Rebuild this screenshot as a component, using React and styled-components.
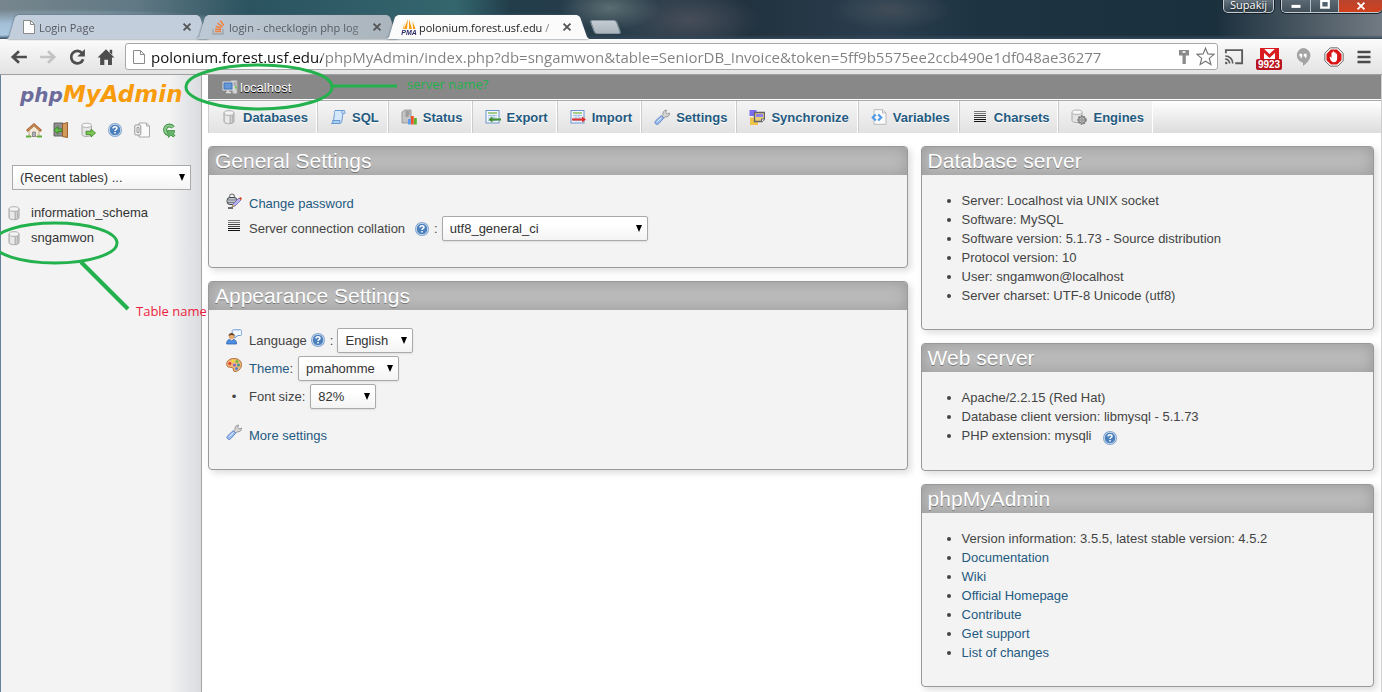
import React from "react";
import styled, { createGlobalStyle, css } from "styled-components";

const GlobalStyle = createGlobalStyle`
  * {
    box-sizing: border-box;
  }

  body {
    margin: 0;
    background: #fff;
    color: #444;
    font-family: "Liberation Sans", Arial, sans-serif;
    font-size: 13px;
    line-height: 19px;
  }

  a {
    color: #235a81;
    text-decoration: none;
  }

  ul {
    margin: 0;
    padding: 0;
    list-style: none;
  }
`;

const uiFont = css`
  font-family: "Open Sans", "Noto Sans", sans-serif;
`;

/* ---------- browser window ---------- */

const Window = styled.div`
  position: relative;
  display: flex;
  flex-direction: column;
  min-height: 100vh;
  overflow: hidden;
`;

const TitleBar = styled.header`
  display: flex;
  align-items: flex-end;
  height: 39px;
  padding-left: 7px;
  ${uiFont}
  background:
    linear-gradient(to bottom, transparent 35px, #33485a 39px),
    radial-gradient(ellipse 260px 30px at 60px 39px, #b3cfe8 0%, #a3bfd8 55%, transparent 100%),
    radial-gradient(ellipse 50px 22px at 610px 8px, #5b6d72 0%, transparent 100%),
    radial-gradient(ellipse 70px 30px at 690px 20px, #464d59 0%, transparent 100%),
    radial-gradient(ellipse 60px 20px at 890px 10px, #414d58 0%, transparent 100%),
    linear-gradient(to right, #77868e 0%, #5f7883 10%, #2b5360 18%, #34666e 33%, #223c4a 37%, #2a3e4b 46%, #22323f 54%, #2a3e4e 64%, #1d3341 71%, #1b303d 88%, #56626c 96%, #717a82 100%);
`;

const Tabs = styled.nav`
  display: flex;
  align-items: flex-end;
`;

const TabShadow = styled.div`
  position: relative;
  z-index: ${(p) => (p.$active ? 2 : 1)};
  margin-right: -12px;
  filter: drop-shadow(0 0 1px #4d5c6a);
`;

const Tab = styled.div`
  display: flex;
  align-items: center;
  width: 202px;
  height: 24px;
  padding: 0 17px 0 14px;
  gap: 2px;
  font-size: 11px;
  color: ${(p) => (p.$active ? "#222" : "#555a62")};
  background: ${(p) => (p.$active ? "#fbfbfb" : p.$tint)};
  clip-path: polygon(0 100%, 2px 92%, 8px 8%, 11px 0, 190px 0, 193px 8%, 200px 92%, 100% 100%);
`;

const TabTitle = styled.span`
  flex: 1;
  white-space: nowrap;
  mask-image: ${(p) => (p.$fade ? "linear-gradient(to right, #000 84%, #0005)" : "none")};
`;

const Muted = styled.span`
  color: #888;
`;

const PlainButton = styled.button`
  display: inline-flex;
  align-items: center;
  justify-content: center;
  padding: 0;
  border: 0;
  background: none;
  color: inherit;
  font: inherit;
`;

const NewTab = styled(PlainButton)`
  width: 27px;
  height: 14px;
  margin: 0 0 5px 15px;
  border-radius: 3px;
  border: 1px solid #8998a2;
  background: linear-gradient(#c4ccd2, #a9b4bb);
  transform: skewX(20deg);
`;

const WindowControls = styled.div`
  display: flex;
  align-self: flex-start;
  gap: 7px;
  margin-left: auto;
`;

const glass = css`
  border: 1px solid #c4cbd1;
  border-top: 0;
  border-radius: 0 0 5px 5px;
  box-shadow: 0 0 0 1px #15222c;
`;

const UserButton = styled(PlainButton)`
  ${glass}
  width: 51px;
  height: 13px;
  padding-bottom: 3px;
  color: #fff;
  font-size: 11px;
  line-height: 10px;
  text-shadow: 0 1px 2px #000;
  background: linear-gradient(#66747e, #33434f);
`;

const CaptionGroup = styled.div`
  ${glass}
  display: flex;
  height: 13px;
  border-right: 0;
  overflow: hidden;
`;

const CaptionButton = styled(PlainButton)`
  width: ${(p) => (p.$close ? 44 : 28)}px;
  border-left: ${(p) => (p.$first ? 0 : 1)}px solid #b5bdc4;
  background: ${(p) =>
    p.$close ? "linear-gradient(#b8442f, #d2401c)" : "linear-gradient(#5b6974, #42505c)"};
`;

const Toolbar = styled.div`
  display: flex;
  align-items: center;
  height: 36px;
  padding: 0 10px;
  border-bottom: 1px solid #a0a0a0;
  background: linear-gradient(#fbfbfb, #e3e3e3);
`;

const NavButtons = styled.div`
  display: flex;
  gap: 11px;
  margin-right: 10px;
`;

const Omnibox = styled.div`
  display: flex;
  flex: 1;
  align-items: center;
  gap: 4px;
  height: 27px;
  padding: 0 2px 0 5px;
  border: 1px solid #a8a8a8;
  border-radius: 3px;
  background: #fff;
`;

/* host part is dark, path part is grey */
const UrlInput = styled.input`
  flex: 1;
  min-width: 0;
  height: 25px;
  padding: 0;
  border: 0;
  outline: 0;
  ${uiFont}
  font-size: 15px;
  color: #808080;
  -webkit-text-fill-color: transparent;
  background: linear-gradient(to right, #111 171px, #808080 171px);
  -webkit-background-clip: text;
  background-clip: text;
`;

const Extensions = styled.div`
  display: flex;
  align-items: center;
  gap: 12px;
  margin-left: 6px;
`;

const Gmail = styled(PlainButton)`
  flex-direction: column;
  width: 26px;
  padding-top: 5px;
`;

const MailCount = styled.span`
  width: 26px;
  margin-top: -4px;
  border-radius: 2px;
  background: #b8141f;
  color: #fff;
  font: bold 10px/11px "Liberation Sans", Arial, sans-serif;
`;

/* ---------- page ---------- */

const Page = styled.div`
  display: flex;
  flex: 1;
  border-left: 1px solid #66809c;
  border-right: 1px solid #d0d0d0;
`;

const Sidebar = styled.aside`
  flex: 0 0 201px;
  border-right: 1px solid #a5a5a5;
  background: linear-gradient(to right, #f3f3f3 168px, #e6e7e9 184px, #dadce0 200px);
`;

const Logo = styled.a`
  display: block;
  height: 46px;
  padding: 4px 0 0 19px;
  font: italic bold 23px/30px "DejaVu Sans", Verdana, sans-serif;
  color: #f89c0e;
  white-space: nowrap;
`;

const LogoPrefix = styled.span`
  font-size: 20px;
  color: #6c6c9c;
`;

const QuickLinks = styled.div`
  display: flex;
  gap: 11px;
  height: 44px;
  padding: 1px 0 0 25px;
`;

const SelectBox = styled.div`
  position: relative;
  width: ${(p) => p.$width}px;

  &::after {
    content: "";
    position: absolute;
    top: 9px;
    right: 6px;
    border: solid transparent;
    border-width: 7px 3px 0;
    border-top-color: #000;
    pointer-events: none;
  }
`;

const Select = styled.select`
  display: block;
  width: 100%;
  height: 25px;
  padding: 0 20px 0 7px;
  appearance: none;
  border: 1px solid #aaa;
  border-radius: ${(p) => (p.$square ? 0 : 2)}px;
  box-shadow: ${(p) => (p.$square ? "none" : "0 1px 2px #ddd")};
  background: linear-gradient(#fff 30%, #f3f3f3);
  color: #333;
  font: inherit;
`;

const Recent = styled.div`
  padding-left: 11px;
`;

const DatabaseList = styled.ul`
  padding: 10px 0 0 5px;
`;

const DatabaseItem = styled.li`
  display: flex;
  align-items: center;
  gap: 9px;
  height: 25px;

  a {
    color: #333;
  }
`;

const Main = styled.main`
  flex: 1;
  min-width: 0;
  padding-left: 6px;
`;

const ServerBar = styled.div`
  display: flex;
  align-items: center;
  gap: 2px;
  height: 24px;
  padding-left: 14px;
  background: #888;

  a {
    color: #fff;
    text-shadow: 0 1px 0 #000;
  }
`;

const TopMenu = styled.ul`
  display: flex;
  height: 33px;
  margin: 1px 0 13px;
  border-top: 1px solid #aaa;
  background: linear-gradient(#fff, #dcdcdc);
`;

const TopMenuItem = styled.li`
  border-left: 1px solid #ccc;
  border-right: 1px solid #fff;
  background: linear-gradient(#f5f5f5, #e2e2e2);

  a {
    display: flex;
    align-items: center;
    gap: 6px;
    height: 32px;
    padding: 0 8px 0 12px;
    font-weight: bold;
    text-shadow: 0 1px 0 #fff;
  }
`;

const Columns = styled.div`
  display: flex;
  gap: 13px;
  padding-right: 7px;
`;

const Column = styled.div`
  flex: ${(p) => (p.$wide ? "0 0 60%" : "1")};
  min-width: 0;
`;

const Panel = styled.section`
  margin-bottom: 13px;
  border: 1px solid #999;
  border-radius: 4px;
  background: #f3f3f3;
  box-shadow: 3px 3px 7px #ddd;

  &:last-child {
    margin-bottom: 5px;
  }
`;

const PanelTitle = styled.h2`
  height: 28px;
  margin: 0;
  padding: 0 6px;
  border-radius: 3px 3px 0 0;
  background: #bbb;
  box-shadow: 0 0 15px #999 inset;
  color: #fff;
  font-size: 21px;
  font-weight: normal;
  line-height: 28px;
  text-shadow: 0 1px 0 #777;
`;

const BulletList = styled.ul`
  padding: 16px 0 24px 40px;
  list-style: disc;
`;

const BulletItem = styled.li`
  svg {
    margin-left: 7px;
    vertical-align: -6px;
  }
`;

const SettingsList = styled.ul`
  padding: 16px 0 ${(p) => (p.$tall ? 20 : 26)}px 17px;
`;

const SettingsRow = styled.li`
  display: flex;
  align-items: center;
  height: ${(p) => (p.$tall ? 28 : 25)}px;
  margin-top: ${(p) => (p.$spaced ? 11 : 0)}px;
`;

/* row icons ride a little above the text */
const RowIcon = styled.span`
  display: flex;
  justify-content: center;
  width: 16px;
  margin-right: 7px;
  padding-bottom: ${(p) => (p.$bullet ? 0 : 6)}px;
`;

const Colon = styled.span`
  padding: 0 4px;
`;

const LabelText = styled.label`
  margin-right: ${(p) => p.$gap ?? 5}px;
`;

/* ---------- hand-drawn notes over the page ---------- */

const Marks = styled.svg`
  position: absolute;
  top: 0;
  left: 0;
  z-index: 5;
  fill: none;
  stroke: #22b14c;
  pointer-events: none;
`;

const Note = styled.span`
  position: absolute;
  z-index: 5;
  top: ${(p) => p.$top}px;
  left: ${(p) => p.$left}px;
  ${uiFont}
  font-size: 13px;
  color: ${(p) => p.$color};
`;

/* ---------- icons ---------- */

const Svg = styled.svg`
  display: ${(p) => (p.$inline ? "inline-block" : "block")};
  flex: none;
  fill: none;
`;

const Icon = ({ size = 16, inline, children }) => (
  <Svg width={size} height={size} viewBox="0 0 16 16" $inline={inline} aria-hidden="true">
    {children}
  </Svg>
);

const DbIcon = () => (
  <Icon>
    <path d="M3 4v8.500c0 1.300 2 2.200 5 2.200s5-.9 5-2.200V4z" fill="#d2d2d2" stroke="#a5a5a5" />
    <path d="M5 6v7.500M7 6.500v8" stroke="#fff" />
    <path d="M9.500 6.500v8M11.500 6v7" stroke="#b5b5b5" />
    <ellipse cx="8" cy="4" rx="5" ry="2.300" fill="#f4f4f4" stroke="#b0b0b0" />
  </Icon>
);

const SqlIcon = () => (
  <Icon>
    <path d="M5 1.500h9.500c-2 .5-1.500 3-1.800 5l-1 6c-.2 1.500-.8 2-2 2H1.500c1.500-.5 1.800-1.500 2-3l1-7c.2-1.500-.5-2 .5-3z" fill="#d5e8fb" stroke="#6a9bd0" />
    <path d="M1.500 14.500c1.500 0 1.500-2 1-3h7.500c0 1.500 0 2.500-1 3z" fill="#a9cdf2" stroke="#6a9bd0" />
    <path d="M12 1.500c-1 1-.5 3 .5 3h2.500c.5-2-.5-3-1.500-3z" fill="#b8d6f5" stroke="#6a9bd0" strokeWidth=".8" />
  </Icon>
);

const StatusIcon = () => (
  <Icon>
    <path d="M1 3l3-2h6v12l-3 1H1z" fill="#c4c4c4" stroke="#8d8d8d" strokeWidth=".8" />
    <path d="M4.500 3h4M4.500 5h4M4.500 7h3" stroke="#777" />
    <path d="M7 15.500V10h2.800v5.500z" fill="#5b9bf0" />
    <path d="M10 15.500V7h2.800v8.500z" fill="#f0552a" />
    <path d="M13 15.500V9h2.800v6.500z" fill="#5cb531" />
  </Icon>
);

const TableGlyph = ({ arrow }) => (
  <Icon>
    <rect x="1" y="1.500" width="13" height="12.500" fill="#f4f8fd" stroke="#6d94cd" />
    <path d="M3 4h9" stroke="#8bbf5f" strokeWidth="1.500" />
    <path d="M3 6.500h9M3 9h9M3 11.500h9M6 5.500v7M9 5.500v7" stroke="#a9c1e4" />
    {arrow === "out" ? (
      <path d="M3.500 10.500l4-3v2H16v2H7.500v2z" fill="#3f8f2c" />
    ) : (
      <path d="M16 10.500l-4-3v2H2v2h10v2z" fill="#e2302b" />
    )}
  </Icon>
);

const WrenchIcon = () => (
  <Icon>
    <path d="M9 5.500c-.5-2 1-4.500 3.500-4.500l-.8 2.500 1.500 1.300L15.500 4c.3 2.500-2 4.500-4.200 3.800L10 9 7.800 6.800z" fill="#d5d5d5" stroke="#888" strokeWidth=".8" />
    <path d="M7.200 6.700l2.500 2.500-5 5.500c-1 1-2.500.8-3.200 0s-.8-2.200.2-3z" fill="#9dbdf0" stroke="#5880c4" strokeWidth=".9" />
    <path d="M3.500 12.500L7.500 8.500" stroke="#dce8fb" />
  </Icon>
);

const SyncIcon = () => (
  <Icon>
    <path d="M.5 1h7v6h-7z" fill="#7a6df0" />
    <path d="M1 8.500h8V16H1z" fill="#efc347" />
    <path d="M5.500 3.500h10V10l-2.500 2.500H5.500z" fill="#e9cf77" stroke="#5f6270" strokeWidth="1.300" />
    <path d="M7 6.500h7" stroke="#8e82ee" strokeWidth="3" />
    <path d="M12.500 13v-3h3" fill="#fff" stroke="#5f6270" />
  </Icon>
);

const VariablesIcon = () => (
  <Icon>
    <path d="M3 .7h8.500L15 4v11.300H3z" fill="#fafafa" stroke="#bbb" />
    <path d="M11.500.7V4H15" stroke="#bbb" />
    <path d="M4.800 5.500l-3 3 3 3M7.200 5.500l3 3-3 3" stroke="#4f9be8" strokeWidth="2.200" />
  </Icon>
);

const CharsetIcon = () => (
  <Icon>
    <path d="M2 2.500h12M2 4.500h12" stroke="#777" />
    <path d="M2 6.500h12M2 8.500h12" stroke="#444" />
    <path d="M2 10.500h12M2 12.500h12" stroke="#111" />
  </Icon>
);

const EngineIcon = () => (
  <Icon>
    <path d="M1 3.500v8c0 1.200 1.800 2 5 2s5-.8 5-2v-8z" fill="#e4e4e4" stroke="#aaa" />
    <ellipse cx="6" cy="3.200" rx="5" ry="2.200" fill="#f8f8f8" stroke="#b0b0b0" />
    <circle cx="11" cy="11" r="3.800" fill="#bbb" stroke="#777" strokeWidth="1.800" strokeDasharray="1.700 1" />
    <circle cx="11" cy="11" r="3.200" fill="#c5c5c5" stroke="#777" />
    <circle cx="11" cy="11" r="1.200" fill="#f4f4f4" stroke="#777" />
  </Icon>
);

const HelpIcon = ({ inline }) => (
  <Icon inline={inline}>
    <circle cx="8" cy="8" r="7" fill="#7fa3cf" />
    <circle cx="8" cy="8" r="5.700" fill="#4b80bd" stroke="#dbe6f3" strokeWidth=".8" />
    <path d="M6 6.500C6 4.200 10 4.200 10 6.300 10 7.800 8 7.600 8 9M8 10v1.500" stroke="#fff" strokeWidth="1.500" />
  </Icon>
);

const HomeIcon = () => (
  <Icon>
    <path d="M3 8v6.500h10V8L8 4z" fill="#f5ead8" stroke="#b39b7c" strokeWidth=".8" />
    <path d="M6.500 14.500V10h3v4.500z" fill="#a8b0bd" stroke="#777" strokeWidth=".7" />
    <path d="M.8 9L8 2.500 15.200 9" stroke="#a76534" strokeWidth="2.400" />
    <path d="M1.500 8.500L8 2.800l6.500 5.700" stroke="#dd9d62" />
    <path d="M0 14.500h5M11 14.500h5" stroke="#5fae3d" strokeWidth="2" />
  </Icon>
);

const ExitIcon = () => (
  <Icon>
    <path d="M1 1h9v13H1z" fill="#8d8d8d" stroke="#666" />
    <path d="M9.500 2l5-1.500v15l-5-1z" fill="#d29b5c" stroke="#98612b" />
    <path d="M1 8l4-3.500V7h4v2.500H5V12z" fill="#66bd4c" stroke="#2f7d22" strokeWidth=".8" />
  </Icon>
);

const QueryIcon = () => (
  <Icon>
    <path d="M2 3.500v9c0 1.200 2 2 4.500 2s5-.8 5-2v-9z" fill="#e6e6e6" stroke="#aaa" />
    <ellipse cx="6.700" cy="3.300" rx="4.700" ry="2.100" fill="#f8f8f8" stroke="#b0b0b0" />
    <path d="M15.500 11l-4.500-4v2.300H6v3.400h5V15z" fill="#7dc653" stroke="#36801f" strokeWidth=".8" />
  </Icon>
);

const DocsIcon = () => (
  <Icon>
    <path d="M5 1h7.500L15.500 4v11H5z" fill="#fafafa" stroke="#aaa" />
    <path d="M12.500 1v3h3" stroke="#aaa" />
    <rect x=".8" y="3" width="6" height="10" rx="1" fill="#f4f4f4" stroke="#999" />
    <path d="M3 5.500h2v5H3z" stroke="#999" />
  </Icon>
);

const ReloadGreenIcon = () => (
  <Icon>
    <path d="M12 5.500A4.300 4.300 0 1 0 7.500 12" stroke="#3c8e43" strokeWidth="4" />
    <path d="M12 5.500A4.300 4.300 0 1 0 7.500 12" stroke="#8ccb8e" strokeWidth="2.200" />
    <path d="M6.500 8.500H13.500v2L12.500 11.500 14 13.500 12 15l-2-2-2.500 2.500z" fill="#66b56b" stroke="#3c8e43" strokeWidth=".8" />
  </Icon>
);

const ServerIcon = () => (
  <Icon>
    <path d="M9 1.500h6v13h-4z" fill="#d4d4d4" stroke="#aaa" />
    <path d="M11 4h3M11 6h3" stroke="#888" />
    <rect x="13" y="7.500" width="1.500" height="2" fill="#55c92b" />
    <rect x="1" y="3" width="10" height="8" fill="#3c70b8" stroke="#ddd" />
    <path d="M2.500 4.500h7v5h-7z" fill="#6698d8" />
    <path d="M4 13.500h5M6 11v2.500" stroke="#ddd" strokeWidth="1.600" />
  </Icon>
);

const PasswordIcon = () => (
  <Icon>
    <path d="M3.500 5V3.500c0-3.300 5-3.300 5 0V5" stroke="#888" strokeWidth="1.300" />
    <rect x="1" y="4.500" width="10" height="7" rx="3" fill="#c3c6ce" stroke="#44464e" />
    <path d="M2 7h8M2 9.500h7" stroke="#777c88" />
    <path d="M2 15h5" stroke="#222" strokeWidth="1.300" />
    <path d="M6 14l1-3 6-6 2 2-6 6z" fill="#b9b2f0" stroke="#6a63ac" strokeWidth=".8" />
    <path d="M13 5l2 2 1-1.500L14.500 4z" fill="#e4431d" />
    <path d="M6 14l.8-2.500L8.500 13z" fill="#e0b321" />
  </Icon>
);

const LanguageIcon = () => (
  <Icon>
    <path d="M7.500.8h7c1 0 1.200.7 1.200 1.500V5c0 1-.5 1.500-1.500 1.500H12L8.500 9l.5-2.500C7 6.500 6.200 5.500 6.200 4V2.300C6.200 1.300 6.500.8 7.500.8z" fill="#f2f8ff" stroke="#6d9bd4" />
    <circle cx="5.500" cy="7.500" r="2.700" fill="#e8a96a" />
    <path d="M2.500 7c0-4 6-4 6-.5-2-.8-4-1-6 .5z" fill="#6b452b" />
    <path d="M.7 15c-.2-3 1.300-4.500 3-4.500l2 1.500 1.500-1.500c2 0 3.500 1.500 3.300 4.500z" fill="#4f8fe0" stroke="#2c62ae" strokeWidth=".8" />
  </Icon>
);

const ThemeIcon = () => (
  <Icon>
    <path d="M8 1.500c4.500 0 7.500 2.500 7.500 6 0 4-3 7-6.500 7-2.500 0-1-2.500-2.200-3.500C5 9.500 1 11.500.7 7.500.5 4 3.500 1.500 8 1.500z" fill="#f0b779" stroke="#b0703a" />
    <circle cx="3.800" cy="6.500" r="1.500" fill="#e33b2a" />
    <circle cx="7" cy="4" r="1.500" fill="#f3dd34" />
    <circle cx="11" cy="4.500" r="1.500" fill="#6fbe3f" />
    <circle cx="12.500" cy="8" r="1.500" fill="#3d9c8e" />
    <circle cx="8.500" cy="8" r="1.600" fill="#8c6bc4" />
    <circle cx="10.500" cy="11.500" r="1.500" fill="#4a80d6" />
  </Icon>
);

const PageIcon = () => (
  <Icon>
    <path d="M2.500 1.500h7l4 4v9h-11z" fill="#fdfdfd" stroke="#8a8a8a" />
    <path d="M9.500 1.500v4h4" stroke="#8a8a8a" />
  </Icon>
);

const StackIcon = () => (
  <Icon>
    <path d="M2 10v5h10v-5" stroke="#a3a6a9" strokeWidth="1.400" />
    <path d="M4 12.500h6M4 10l6 .8M4.800 7.200l5.700 2M6.500 4.200l5 3.600M9.300 1.500l3.500 5" stroke="#ee8140" strokeWidth="1.500" />
  </Icon>
);

const Pma = styled.span`
  display: flex;
  flex: none;
  flex-direction: column;
  align-items: center;
  width: 16px;
  color: #2c2a66;
  font: italic bold 7px/6px "Liberation Sans", Arial, sans-serif;
`;

const PmaIcon = () => (
  <Pma>
    <svg width="14" height="11" viewBox="0 0 14 11" aria-hidden="true">
      <path d="M6 0L2 10h3zM7 0v10h3zM10.500 2l.5 8h2.500z" fill="#f89c0e" />
      <path d="M3 3L.5 10H2z" fill="#fbc35e" />
    </svg>
    PMA
  </Pma>
);

const CloseIcon = ({ color = "#555" }) => (
  <Icon size={10}>
    <path d="M2.500 2.500l11 11M13.500 2.500l-11 11" stroke={color} strokeWidth="3" />
  </Icon>
);

const BackIcon = () => (
  <Icon size={18}>
    <path d="M15 8H2.500M8 2.800L2.500 8 8 13.200" stroke="#4d4d4d" strokeWidth="2.400" />
  </Icon>
);

const ForwardIcon = () => (
  <Icon size={18}>
    <path d="M1 8h12.500M8 2.800L13.500 8 8 13.200" stroke="#c3c3c3" strokeWidth="2.400" />
  </Icon>
);

const ReloadIcon = () => (
  <Icon size={18}>
    <path d="M12.500 4.500A5.500 5.500 0 1 0 13.500 10" stroke="#4d4d4d" strokeWidth="2.400" />
    <path d="M15 .8v6.700H8.300z" fill="#4d4d4d" />
  </Icon>
);

const BrowserHomeIcon = () => (
  <Icon size={18}>
    <path d="M8 1l7.500 7.500H13.300V15H9.800v-4.500H6.500V15H2.800V8.500H.5z" fill="#4d4d4d" />
    <path d="M11.300 1.500h2.200v4.500l-2.200-2.200z" fill="#4d4d4d" />
  </Icon>
);

const KeyIcon = () => (
  <Icon>
    <path d="M3 1h10v5.500H9.800V15H6.500V6.500H3z" fill="#8a8a8a" />
    <path d="M6.500 3h3" stroke="#fff" strokeWidth="1.600" />
  </Icon>
);

const StarIcon = () => (
  <Icon size={19}>
    <path d="M8 1l2 4.800 5.200.4-4 3.400 1.300 5.100L8 12l-4.500 2.700 1.300-5.100-4-3.400L6 5.800z" stroke="#777" strokeWidth="1" />
  </Icon>
);

const CastIcon = () => (
  <Icon size={20}>
    <path d="M1.500 5V2.500h13v10.500H9" stroke="#5c5c5c" strokeWidth="1.500" />
    <path d="M1 7.200c3.500 0 6 2.500 6 6M1 9.700c2 0 3.500 1.500 3.500 3.500" stroke="#5c5c5c" strokeWidth="1.300" />
    <circle cx="1.800" cy="12.700" r="1" fill="#5c5c5c" />
  </Icon>
);

const MailIcon = () => (
  <svg width="19" height="15" viewBox="0 0 19 15" aria-hidden="true">
    <path d="M0 0h19v15H0z" fill="#d81c21" />
    <path d="M4 3v12h11V3L9.500 8z" fill="#fff" />
    <path d="M2 1l7.500 7L17 1" fill="#fff" stroke="#d81c21" strokeWidth="3" />
  </svg>
);

const HangoutsIcon = () => (
  <Icon size={18}>
    <path d="M8 0a6.600 6.600 0 0 1 6.600 6.500C14.600 10.500 11 14 8 16v-3A6.600 6.600 0 0 1 8 0z" fill="#a3a3a3" />
    <path d="M4.800 5h2.500v3L6 9.500V7.500H4.800zM8.700 5h2.500v3L10 9.500V7.500H8.700z" fill="#fff" />
  </Icon>
);

const AdblockIcon = () => (
  <Icon size={20}>
    <path d="M5 .7h6L15.300 5v6L11 15.300H5L.7 11V5z" fill="#fff" stroke="#666" strokeWidth=".8" />
    <path d="M5.500 2h5L14 5.500v5L10.500 14h-5L2 10.500v-5z" fill="#d81414" />
    <path d="M4.500 8c.8-.5 1 .3 1.500.8V5c0-1 1-1 1 0V4.200c0-1 1.200-1 1.200 0V5c0-1 1.200-1 1.200 0v.8c0-.8 1.100-.8 1.100 0V9c0 2-.8 3.200-2.700 3.200-2 0-2.600-1.700-3.300-4.200z" fill="#fff" />
  </Icon>
);

const MenuIcon = () => (
  <Icon>
    <path d="M1.500 3h13M1.500 8h13M1.500 13h13" stroke="#4a4a4a" strokeWidth="2.600" />
  </Icon>
);

/* ---------- data ---------- */

const topMenu = [
  ["Databases", DbIcon],
  ["SQL", SqlIcon],
  ["Status", StatusIcon],
  ["Export", () => <TableGlyph arrow="out" />],
  ["Import", () => <TableGlyph arrow="in" />],
  ["Settings", WrenchIcon],
  ["Synchronize", SyncIcon],
  ["Variables", VariablesIcon],
  ["Charsets", CharsetIcon],
  ["Engines", EngineIcon],
];

const quickLinks = [
  ["Home", HomeIcon],
  ["Log out", ExitIcon],
  ["Query window", QueryIcon],
  ["phpMyAdmin documentation", HelpIcon],
  ["Documentation", DocsIcon],
  ["Reload navigation frame", ReloadGreenIcon],
];

const serverInfo = [
  "Server: Localhost via UNIX socket",
  "Software: MySQL",
  "Software version: 5.1.73 - Source distribution",
  "Protocol version: 10",
  "User: sngamwon@localhost",
  "Server charset: UTF-8 Unicode (utf8)",
];

const projectLinks = [
  "Documentation",
  "Wiki",
  "Official Homepage",
  "Contribute",
  "Get support",
  "List of changes",
];

const Dropdown = ({ id, width, value, square, label }) => (
  <SelectBox $width={width}>
    <Select id={id} $square={square} aria-label={label}>
      <option>{value}</option>
    </Select>
  </SelectBox>
);

const Browser = () => (
  <>
    <TitleBar>
      <Tabs>
        <TabShadow>
          <Tab $tint="#c3cedc">
            <PageIcon />
            <TabTitle>Login Page</TabTitle>
            <PlainButton aria-label="Close tab"><CloseIcon /></PlainButton>
          </Tab>
        </TabShadow>
        <TabShadow>
          <Tab $tint="linear-gradient(to right, #bdc9d5, #a9b4bc)">
            <StackIcon />
            <TabTitle $fade>login - checklogin php log</TabTitle>
            <PlainButton aria-label="Close tab"><CloseIcon /></PlainButton>
          </Tab>
        </TabShadow>
        <TabShadow $active>
          <Tab $active>
            <PmaIcon />
            <TabTitle>polonium.forest.usf.edu <Muted>/</Muted></TabTitle>
            <PlainButton aria-label="Close tab"><CloseIcon /></PlainButton>
          </Tab>
        </TabShadow>
        <NewTab aria-label="New tab" />
      </Tabs>
      <WindowControls>
        <UserButton>Supakij</UserButton>
        <CaptionGroup>
          <CaptionButton $first aria-label="Minimize">
            <Icon size={12}><path d="M2 8.500h12" stroke="#fff" strokeWidth="4" /></Icon>
          </CaptionButton>
          <CaptionButton aria-label="Maximize">
            <Icon size={12}><path d="M3 1h10v9H3z" stroke="#fff" strokeWidth="3" /></Icon>
          </CaptionButton>
          <CaptionButton $close aria-label="Close"><CloseIcon color="#fff" /></CaptionButton>
        </CaptionGroup>
      </WindowControls>
    </TitleBar>
    <Toolbar>
      <NavButtons>
        <PlainButton aria-label="Back"><BackIcon /></PlainButton>
        <PlainButton aria-label="Forward"><ForwardIcon /></PlainButton>
        <PlainButton aria-label="Reload"><ReloadIcon /></PlainButton>
        <PlainButton aria-label="Home"><BrowserHomeIcon /></PlainButton>
      </NavButtons>
      <Omnibox>
        <PageIcon />
        <UrlInput
          aria-label="Address"
          defaultValue="polonium.forest.usf.edu/phpMyAdmin/index.php?db=sngamwon&table=SeniorDB_Invoice&token=5ff9b5575ee2ccb490e1df048ae36277"
        />
        <PlainButton aria-label="Saved passwords"><KeyIcon /></PlainButton>
        <PlainButton aria-label="Bookmark"><StarIcon /></PlainButton>
      </Omnibox>
      <Extensions>
        <PlainButton aria-label="Cast"><CastIcon /></PlainButton>
        <Gmail aria-label="Mail">
          <MailIcon />
          <MailCount>9923</MailCount>
        </Gmail>
        <PlainButton aria-label="Hangouts"><HangoutsIcon /></PlainButton>
        <PlainButton aria-label="Adblock"><AdblockIcon /></PlainButton>
        <PlainButton aria-label="Menu"><MenuIcon /></PlainButton>
      </Extensions>
    </Toolbar>
  </>
);

const Navigation = () => (
  <Sidebar>
    <Logo href="#"><LogoPrefix>php</LogoPrefix>MyAdmin</Logo>
    <QuickLinks>
      {quickLinks.map(([label, Glyph]) => (
        <a href="#" key={label} aria-label={label}><Glyph /></a>
      ))}
    </QuickLinks>
    <Recent>
      <Dropdown width={179} value="(Recent tables) ..." label="Recent tables" square />
    </Recent>
    <DatabaseList>
      {["information_schema", "sngamwon"].map((name) => (
        <DatabaseItem key={name}>
          <DbIcon />
          <a href="#">{name}</a>
        </DatabaseItem>
      ))}
    </DatabaseList>
  </Sidebar>
);

const App = () => {
  return (
    <Window>
      <GlobalStyle />
      <Browser />
      <Page>
        <Navigation />
        <Main>
          <ServerBar>
            <ServerIcon />
            <a href="#">localhost</a>
          </ServerBar>
          <TopMenu>
            {topMenu.map(([label, Glyph]) => (
              <TopMenuItem key={label}>
                <a href="#"><Glyph />{label}</a>
              </TopMenuItem>
            ))}
          </TopMenu>
          <Columns>
            <Column $wide>
              <Panel>
                <PanelTitle>General Settings</PanelTitle>
                <SettingsList>
                  <SettingsRow>
                    <RowIcon><PasswordIcon /></RowIcon>
                    <a href="#">Change password</a>
                  </SettingsRow>
                  <SettingsRow>
                    <RowIcon><CharsetIcon /></RowIcon>
                    <LabelText htmlFor="collation" $gap={9}>Server connection collation</LabelText>
                    <HelpIcon />
                    <Colon>:</Colon>
                    <Dropdown id="collation" width={206} value="utf8_general_ci" />
                  </SettingsRow>
                </SettingsList>
              </Panel>
              <Panel>
                <PanelTitle>Appearance Settings</PanelTitle>
                <SettingsList $tall>
                  <SettingsRow $tall>
                    <RowIcon><LanguageIcon /></RowIcon>
                    <LabelText htmlFor="language" $gap={3}>Language</LabelText>
                    <HelpIcon />
                    <Colon>:</Colon>
                    <Dropdown id="language" width={76} value="English" />
                  </SettingsRow>
                  <SettingsRow $tall>
                    <RowIcon><ThemeIcon /></RowIcon>
                    <LabelText htmlFor="theme"><a href="#">Theme</a>:</LabelText>
                    <Dropdown id="theme" width={101} value="pmahomme" />
                  </SettingsRow>
                  <SettingsRow $tall>
                    <RowIcon $bullet>•</RowIcon>
                    <LabelText htmlFor="fontsize">Font size:</LabelText>
                    <Dropdown id="fontsize" width={66} value="82%" />
                  </SettingsRow>
                  <SettingsRow $tall $spaced>
                    <RowIcon><WrenchIcon /></RowIcon>
                    <a href="#">More settings</a>
                  </SettingsRow>
                </SettingsList>
              </Panel>
            </Column>
            <Column>
              <Panel>
                <PanelTitle>Database server</PanelTitle>
                <BulletList>
                  {serverInfo.map((line) => (
                    <BulletItem key={line}>{line}</BulletItem>
                  ))}
                </BulletList>
              </Panel>
              <Panel>
                <PanelTitle>Web server</PanelTitle>
                <BulletList>
                  <BulletItem>Apache/2.2.15 (Red Hat)</BulletItem>
                  <BulletItem>Database client version: libmysql - 5.1.73</BulletItem>
                  <BulletItem>PHP extension: mysqli <HelpIcon inline /></BulletItem>
                </BulletList>
              </Panel>
              <Panel>
                <PanelTitle>phpMyAdmin</PanelTitle>
                <BulletList>
                  <BulletItem>Version information: 3.5.5, latest stable version: 4.5.2</BulletItem>
                  {projectLinks.map((label) => (
                    <BulletItem key={label}><a href="#">{label}</a></BulletItem>
                  ))}
                </BulletList>
              </Panel>
            </Column>
          </Columns>
        </Main>
      </Page>
      <Marks width="420" height="330" aria-hidden="true">
        <ellipse cx="259" cy="87" rx="73" ry="22" strokeWidth="3" />
        <path d="M331 86h66" strokeWidth="3" />
        <ellipse cx="55" cy="243" rx="62" ry="20" strokeWidth="3" />
        <path d="M81 262l47 47" strokeWidth="4" />
      </Marks>
      <Note $top={75} $left={407} $color="#22b14c">server name?</Note>
      <Note $top={302} $left={136} $color="#ed1c40">Table name</Note>
    </Window>
  );
};

export default App;
